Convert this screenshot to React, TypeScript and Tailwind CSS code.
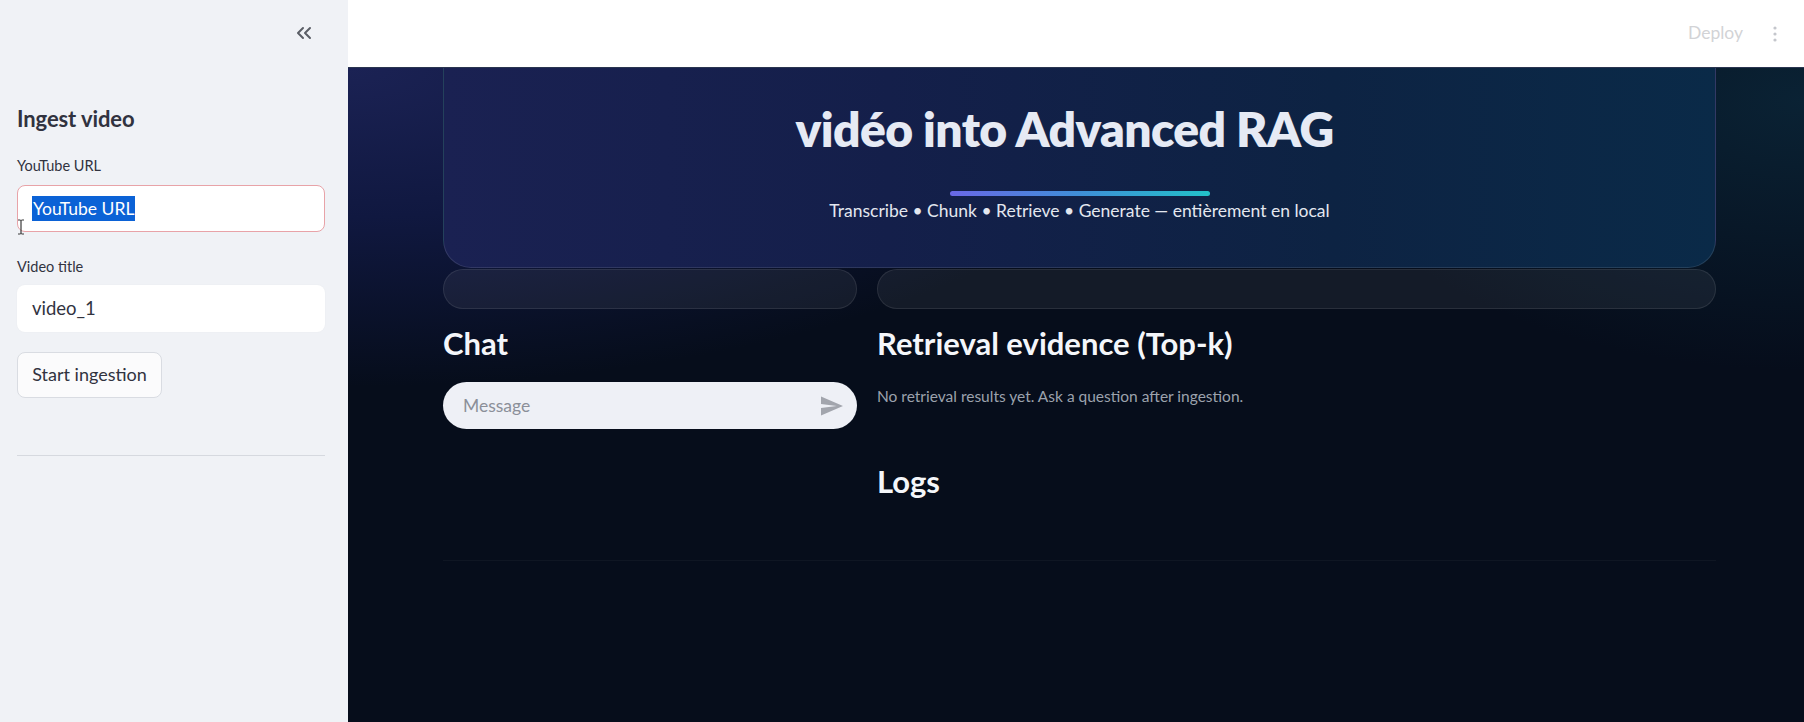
import React from "react";

function ChevronsLeftIcon() {
  return (
    <svg width="18" height="14" viewBox="0 0 18 14" fill="none" stroke="#5b5e66" strokeWidth="2" strokeLinecap="round" strokeLinejoin="round">
      <path d="M8 2L3 7l5 5" />
      <path d="M15 2l-5 5 5 5" />
    </svg>
  );
}

function SendIcon() {
  return (
    <svg width="22" height="20" viewBox="2 3 21 18" fill="#a2a5ad">
      <path d="M2.01 21L23 12 2.01 3 2 10l15 2-15 2z" />
    </svg>
  );
}

function DotsIcon() {
  return (
    <svg width="4" height="16" viewBox="0 0 4 16" fill="#c4c6cc">
      <circle cx="2" cy="2" r="1.6" />
      <circle cx="2" cy="8" r="1.6" />
      <circle cx="2" cy="14" r="1.6" />
    </svg>
  );
}

function IBeam() {
  return (
    <svg width="8" height="16" viewBox="0 0 8 16" fill="none" stroke="#3a3a3a" strokeWidth="1.2">
      <path d="M1 1h2.5M4.5 1H7M4 1v14M1 15h2.5M4.5 15H7" />
    </svg>
  );
}

export default function App() {
  return (
    <div className="flex h-[722px] w-[1804px] overflow-hidden [font-family:Lato,'Noto_Sans',sans-serif]">
      {/* Sidebar */}
      <aside className="flex w-[348px] shrink-0 flex-col bg-[#f0f2f6] pl-[17px] pr-[23px] text-[#31333f]">
        <div className="flex h-[65px] items-center justify-end pr-[12px] pt-[1px]">
          <ChevronsLeftIcon />
        </div>
        <h2 className="mt-[41px] text-[22px] font-bold leading-[1.2] tracking-[-0.1px]">Ingest video</h2>
        <label className="mt-[23px] text-[14.5px] leading-[1.5]">YouTube URL</label>
        <div className="relative mt-[8px] flex h-[47px] items-center rounded-[8px] border border-[#e8a3a8] bg-white pl-[14px]">
          <span className="bg-[#0b62d6] px-[1px] text-[17.5px] leading-[25px] text-white">YouTube URL</span>
          <div className="absolute left-[-1px] top-[33px]">
            <IBeam />
          </div>
        </div>
        <label className="mt-[24px] text-[14.5px] leading-[1.5]">Video title</label>
        <div className="mt-[7px] flex h-[47px] items-center rounded-[8px] bg-white pl-[15px] text-[18.5px] shadow-[0_0_2px_rgba(0,0,0,0.04)]">
          video_1
        </div>
        <div className="mt-[20px]">
          <button className="h-[46px] w-[145px] rounded-[8px] border border-[#d9dce2] bg-[#fbfbfc] text-[18px]">
            Start ingestion
          </button>
        </div>
        <div className="mt-[57px] h-px bg-[#d6d9df]" />
      </aside>

      {/* Main */}
      <main className="flex min-w-0 flex-1 flex-col">
        <header className="flex h-[67px] shrink-0 items-center justify-end gap-[30px] bg-white pr-[27px]">
          <span className="text-[17.5px] text-[#d2d3d6]">Deploy</span>
          <DotsIcon />
        </header>
        <div className="flex-1 overflow-hidden border-t border-[#2a3550] bg-[#060d1b] bg-[radial-gradient(ellipse_75%_65%_at_0%_0%,#1b2254_0%,#101840_35%,transparent_75%),radial-gradient(ellipse_45%_55%_at_100%_5%,#0a2234_0%,transparent_75%)] pl-[95px] pr-[88px]">
          {/* Hero card */}
          <div className="-mt-[41px] flex h-[241px] flex-col items-center rounded-[28px] border border-[#ffffff1c] bg-[linear-gradient(90deg,#1a2152_0%,#141f4a_35%,#0d2343_70%,#0a2a48_100%)] pt-[72px]">
            <h1 className="pr-[30px] text-[48px] font-extrabold leading-[1.2] tracking-[-0.6px] text-[#e6eaf4]">
              vidéo into Advanced RAG
            </h1>
            <div className="mt-[33px] h-[5px] w-[260px] rounded-full bg-[linear-gradient(90deg,#6a68e6,#3f8fd8,#22c1c8)]" />
            <p className="mt-[2px] text-[17.5px] leading-[1.5] text-[#e3e7ef]">
              Transcribe • Chunk • Retrieve • Generate — entièrement en local
            </p>
          </div>

          {/* Columns */}
          <div className="mt-[1px] grid grid-cols-[414px_1fr] gap-[20px]">
            <div className="flex flex-col">
              <div className="h-[40px] rounded-full border border-[#ffffff17] bg-[#ffffff0f]" />
              <h3 className="mt-[16px] text-[31px] font-bold leading-[1.2] text-[#f4f6fa]">Chat</h3>
              <div className="mt-[20px] flex h-[47px] items-center justify-between rounded-full bg-[#eef0f6] pl-[20px] pr-[14px]">
                <span className="text-[17.5px] text-[#8b8f99]">Message</span>
                <SendIcon />
              </div>
            </div>
            <div className="flex flex-col">
              <div className="h-[40px] rounded-full border border-[#ffffff17] bg-[#ffffff0f]" />
              <h3 className="mt-[16px] text-[31px] font-bold leading-[1.2] text-[#f4f6fa]">
                Retrieval evidence (Top-k)
              </h3>
              <p className="mt-[23px] text-[15.5px] leading-[1.5] text-[#9ca2ad]">
                No retrieval results yet. Ask a question after ingestion.
              </p>
              <h3 className="mt-[55px] text-[31px] font-bold leading-[1.2] text-[#f4f6fa]">Logs</h3>
            </div>
          </div>
          <div className="mt-[59px] h-px bg-[#ffffff0a]" />
        </div>
      </main>
    </div>
  );
}
